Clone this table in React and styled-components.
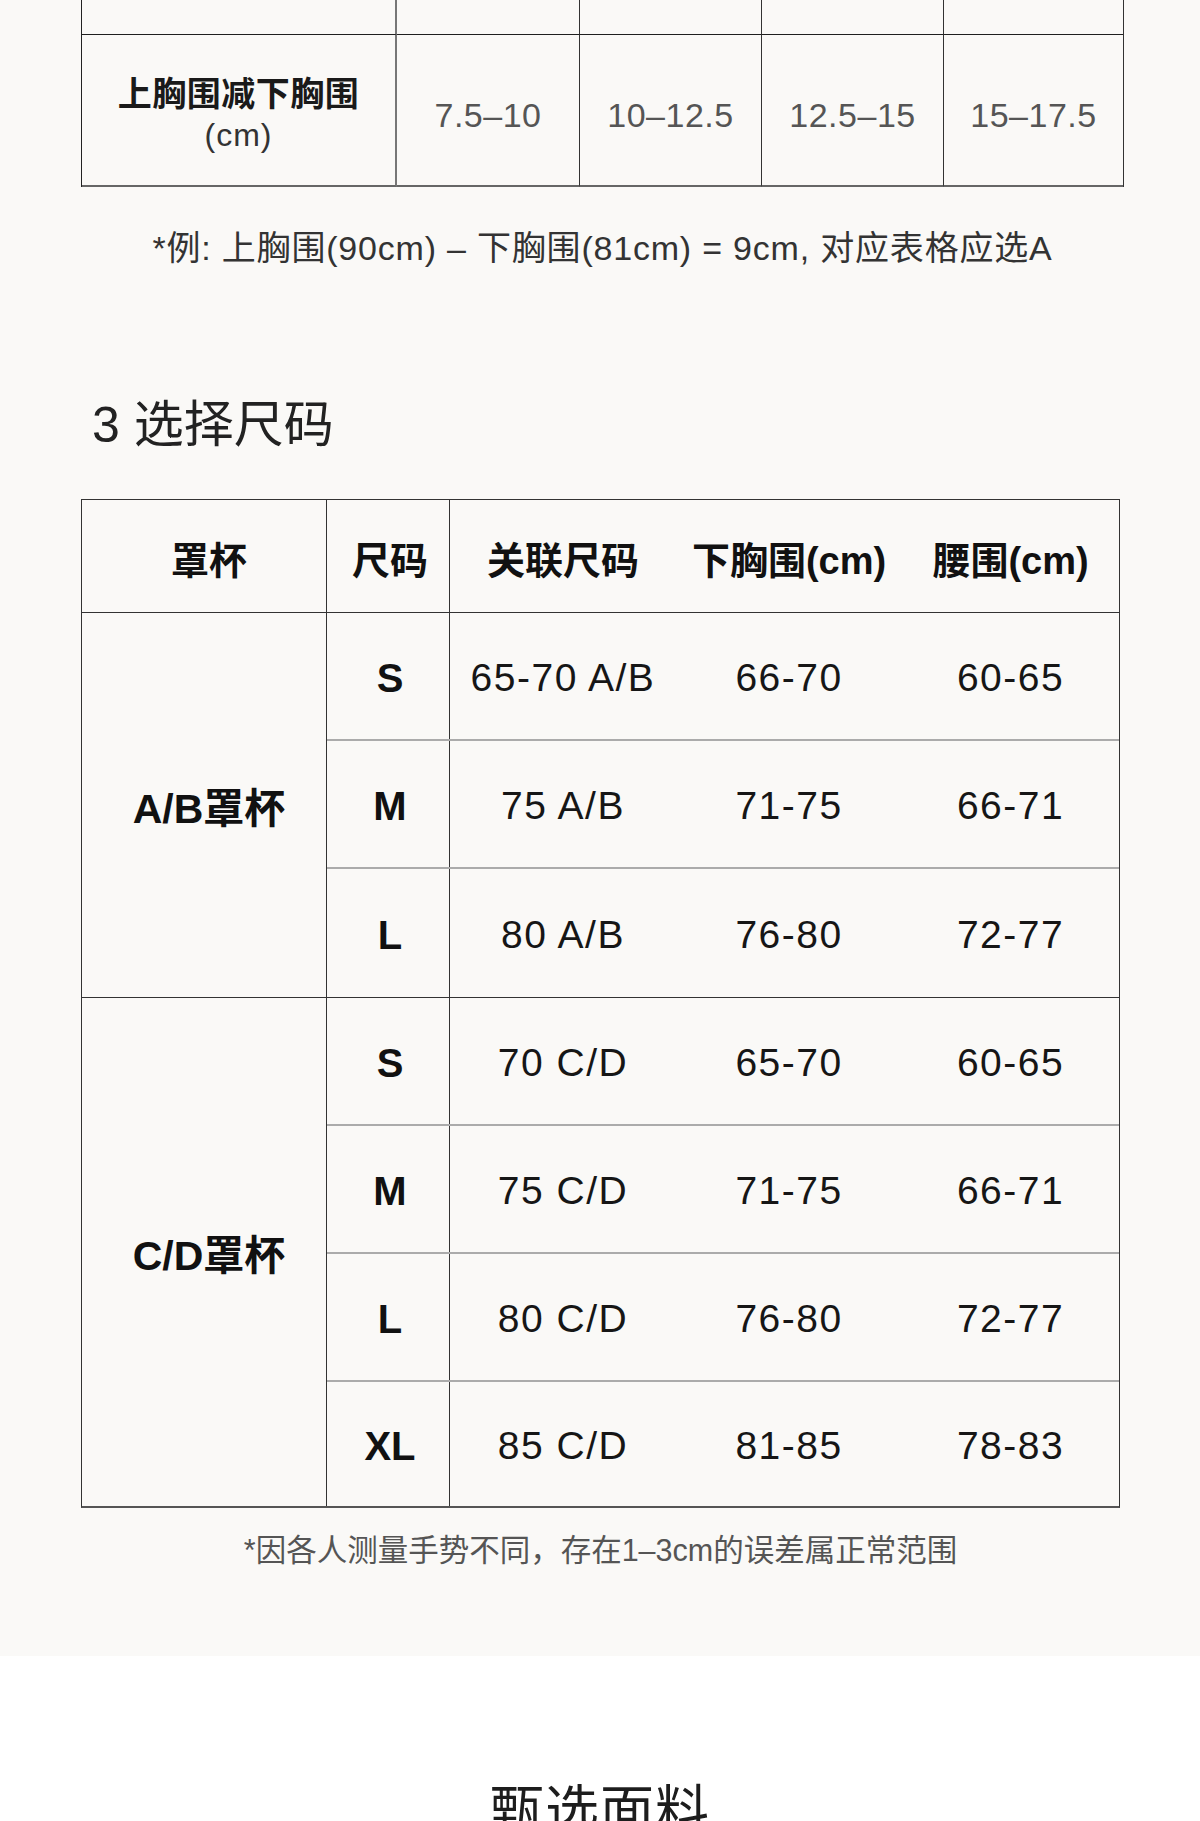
import React from "react";
import styled, { createGlobalStyle } from "styled-components";

const GlobalStyle = createGlobalStyle`
  html, body { margin: 0; padding: 0; background: #ffffff; }
  body {
    font-family: "Liberation Sans", "Noto Sans CJK SC", sans-serif;
    color: #1a1a1a;
  }
  * { box-sizing: border-box; }
`;

const Sheet = styled.section`
  background: #faf9f7;
  height: 1656px;
  padding-left: 81px;
  display: flex;
  flex-direction: column;
`;

const DiffTable = styled.div`
  width: 1043px;
  display: grid;
  grid-template-columns: 315px 183px 182px 182px 1fr;
  grid-template-rows: 35px 152px;
  border-left: 1px solid #222;
  border-right: 1px solid #333;
`;

const DiffCell = styled.div`
  display: flex;
  flex-direction: column;
  align-items: center;
  justify-content: center;
  border-right: ${(p) => (p.$last ? "none" : p.$soft ? "2px solid #777" : "1px solid #333")};
  border-bottom: ${(p) => (p.$top ? "1px solid #1f1f1f" : "2px solid #666")};
  padding-top: ${(p) => (p.$top ? "0" : "8px")};
`;

const DiffLabel = styled.div`
  font-size: 34px;
  font-weight: 700;
  line-height: 42px;
  color: #1a1a1a;
  letter-spacing: 0.5px;
`;

const DiffUnit = styled.div`
  font-size: 32px;
  line-height: 40px;
  color: #333;
  letter-spacing: 1px;
`;

const DiffValue = styled.div`
  font-size: 34px;
  line-height: 40px;
  color: #555;
  padding-top: 2px;
  letter-spacing: 0.5px;
`;

const Example = styled.p`
  margin: 41px 0 0;
  width: 1043px;
  text-align: center;
  font-size: 34px;
  line-height: 40px;
  color: #333;
  letter-spacing: 0.8px;
  white-space: nowrap;
`;

const Heading = styled.h2`
  margin: 127px 0 0 11px;
  font-size: 50px;
  line-height: 60px;
  font-weight: 400;
  color: #222;
`;

const SizeTable = styled.div`
  margin-top: 44px;
  width: 1039px;
  border: 1px solid #333;
  border-bottom: 2px solid #555;
  display: flex;
  flex-direction: column;
`;

const HeadRow = styled.div`
  display: grid;
  grid-template-columns: 245px 123px 226px 226px 1fr;
  height: 113px;
  border-bottom: 1px solid #333;
`;

const HeadCell = styled.div`
  display: flex;
  align-items: center;
  justify-content: center;
  font-size: 38px;
  font-weight: 700;
  color: #111;
  padding-top: 2px;
  padding-left: ${(p) => p.$indent || 0}px;
  border-right: ${(p) => (p.$divider ? "1px solid #333" : "none")};
  white-space: nowrap;
`;

const Group = styled.div`
  display: flex;
  border-bottom: ${(p) => (p.$last ? "none" : "1px solid #333")};
`;

const GroupLabel = styled.div`
  width: 245px;
  flex: none;
  display: flex;
  align-items: center;
  justify-content: center;
  padding-left: 10px;
  font-size: 41px;
  font-weight: 700;
  color: #111;
  border-right: 1px solid #333;
`;

const GroupRows = styled.div`
  flex: 1;
  display: flex;
  flex-direction: column;
`;

const SizeRow = styled.div`
  display: grid;
  grid-template-columns: 123px 226px 226px 1fr;
  height: ${(p) => p.$h}px;
  border-bottom: ${(p) => (p.$last ? "none" : "2px solid #ababab")};
`;

const SizeCell = styled.div`
  display: flex;
  align-items: center;
  justify-content: center;
  padding: 4px 0 0 4px;
  font-size: 40px;
  font-weight: 700;
  color: #111;
  border-right: 1px solid #333;
`;

const ValueCell = styled.div`
  display: flex;
  align-items: center;
  justify-content: center;
  padding-top: 4px;
  font-size: 39px;
  letter-spacing: 1.5px;
  color: #161616;
  white-space: nowrap;
`;

const Note = styled.p`
  margin: 22px 0 0;
  width: 1039px;
  text-align: center;
  font-size: 30.5px;
  line-height: 40px;
  color: #555;
  white-space: nowrap;
`;

const Lower = styled.section`
  background: #ffffff;
  padding-top: 123px;
  display: flex;
  justify-content: center;
`;

const LowerTitle = styled.h2`
  margin: 0;
  font-size: 54px;
  line-height: 64px;
  font-weight: 400;
  color: #1d1d1d;
  letter-spacing: 1px;
`;

const diffValues = ["7.5–10", "10–12.5", "12.5–15", "15–17.5"];

const groups = [
  {
    label: "A/B罩杯",
    rows: [
      ["S", "65-70 A/B", "66-70", "60-65"],
      ["M", "75 A/B", "71-75", "66-71"],
      ["L", "80 A/B", "76-80", "72-77"],
    ],
  },
  {
    label: "C/D罩杯",
    rows: [
      ["S", "70 C/D", "65-70", "60-65"],
      ["M", "75 C/D", "71-75", "66-71"],
      ["L", "80 C/D", "76-80", "72-77"],
      ["XL", "85 C/D", "81-85", "78-83"],
    ],
  },
];

export default function App() {
  return (
    <>
      <GlobalStyle />
      <Sheet>
        <DiffTable>
          <DiffCell $top $soft />
          <DiffCell $top />
          <DiffCell $top />
          <DiffCell $top />
          <DiffCell $top $last />
          <DiffCell $soft>
            <DiffLabel>上胸围减下胸围</DiffLabel>
            <DiffUnit>(cm)</DiffUnit>
          </DiffCell>
          {diffValues.map((v, i) => (
            <DiffCell key={v} $last={i === diffValues.length - 1}>
              <DiffValue>{v}</DiffValue>
            </DiffCell>
          ))}
        </DiffTable>

        <Example>*例: 上胸围(90cm) – 下胸围(81cm) = 9cm, 对应表格应选A</Example>

        <Heading>3 选择尺码</Heading>

        <SizeTable>
          <HeadRow>
            <HeadCell $divider $indent={10}>罩杯</HeadCell>
            <HeadCell $divider $indent={4}>尺码</HeadCell>
            <HeadCell>关联尺码</HeadCell>
            <HeadCell>下胸围(cm)</HeadCell>
            <HeadCell>腰围(cm)</HeadCell>
          </HeadRow>
          {groups.map((g, gi) => (
            <Group key={g.label} $last={gi === groups.length - 1}>
              <GroupLabel>{g.label}</GroupLabel>
              <GroupRows>
                {g.rows.map((r, ri) => {
                  const last = ri === g.rows.length - 1;
                  const h = gi === groups.length - 1 && last ? 124 : 128;
                  return (
                    <SizeRow key={r[0]} $last={last} $h={h}>
                      <SizeCell>{r[0]}</SizeCell>
                      <ValueCell>{r[1]}</ValueCell>
                      <ValueCell>{r[2]}</ValueCell>
                      <ValueCell>{r[3]}</ValueCell>
                    </SizeRow>
                  );
                })}
              </GroupRows>
            </Group>
          ))}
        </SizeTable>

        <Note>*因各人测量手势不同，存在1–3cm的误差属正常范围</Note>
      </Sheet>
      <Lower>
        <LowerTitle>甄选面料</LowerTitle>
      </Lower>
    </>
  );
}
